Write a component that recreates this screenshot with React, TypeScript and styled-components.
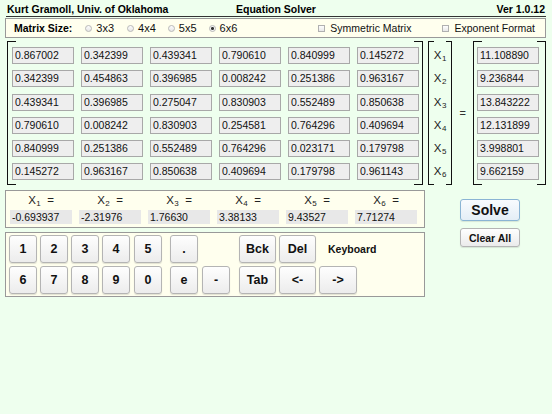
import React from "react";
import styled, { createGlobalStyle } from "styled-components";

const Global = createGlobalStyle`
  html, body { margin: 0; padding: 0; background: #eeffee; }
  body { font-family: "Liberation Sans", Arial, Helvetica, sans-serif; color: #000; }
  * { box-sizing: border-box; }
`;

const Page = styled.div`
  width: 552px;
  height: 414px;
  padding: 0 6px 0 5px;
  background: #eeffee;
`;

const TitleBar = styled.div`
  display: grid;
  grid-template-columns: 1fr auto 1fr;
  align-items: center;
  height: 17px;
  margin-left: 1px;
  padding: 0 1px;
  border-bottom: 1.5px solid #333;
  font-size: 10.5px;
  font-weight: bold;
`;

const TitleText = styled.div<{ $align: string }>`
  text-align: ${(p) => p.$align};
  padding-top: 1px;
`;

const SizeBar = styled.div`
  margin-top: 1px;
  height: 20px;
  display: flex;
  align-items: center;
  padding: 0 10px 0 8px;
  background: #ffffee;
  border: 1px solid #999;
  font-size: 10.5px;
`;

const SizeLabel = styled.span`
  font-weight: bold;
  margin-right: 13px;
`;

const Option = styled.label<{ $gap?: number; $ml?: string; $fs?: number }>`
  display: flex;
  align-items: center;
  gap: 4px;
  margin-right: ${(p) => p.$gap ?? 0}px;
  margin-left: ${(p) => p.$ml ?? "0"};
  font-size: ${(p) => p.$fs ?? 11}px;
  color: #111;
`;

const Radio = styled.span<{ $on?: boolean }>`
  width: 7px;
  height: 7px;
  border-radius: 50%;
  border: 1px solid #b8b8b8;
  background: ${(p) =>
    p.$on
      ? "radial-gradient(circle, #333 0 1.3px, #f4f4f4 1.6px)"
      : "linear-gradient(#fdfdfd, #e6e6e6)"};
`;

const Check = styled.span`
  width: 7px;
  height: 7px;
  border: 1px solid #b0b0b0;
  background: linear-gradient(#fdfdfd, #e8e8e8);
  margin-right: 1px;
`;

const MatrixArea = styled.div`
  display: flex;
  margin-top: 3px;
  margin-left: 2px;
  height: 144px;
`;

const Bracket = styled.div<{ $tick: number; $w: number; $pl: number }>`
  width: ${(p) => p.$w}px;
  border-left: 1px solid #111;
  border-right: 1px solid #111;
  padding: 6px 0 0 ${(p) => p.$pl}px;
  background:
    linear-gradient(#111, #111) left top / ${(p) => p.$tick}px 1px no-repeat,
    linear-gradient(#111, #111) right top / ${(p) => p.$tick}px 1px no-repeat,
    linear-gradient(#111, #111) left bottom / ${(p) => p.$tick}px 1px no-repeat,
    linear-gradient(#111, #111) right bottom / ${(p) => p.$tick}px 1px no-repeat;
`;

const CellGrid = styled.div<{ $cols: number }>`
  display: grid;
  grid-template-columns: repeat(${(p) => p.$cols}, 62px);
  grid-auto-rows: 17px;
  column-gap: 7px;
  row-gap: 6.3px;
`;

const Cell = styled.div`
  background: #eeeeee;
  border: 1px solid #a8a8a8;
  font-size: 10.5px;
  line-height: 15px;
  padding-left: 2px;
  color: #111;
`;

const XLabel = styled.div`
  text-align: center;
  font-size: 11.5px;
  line-height: 17px;
  color: #222;
  sub {
    font-size: 8px;
    line-height: 0;
    vertical-align: -2px;
    margin-left: 0.5px;
  }
`;

const XGrid = styled.div`
  display: grid;
  grid-auto-rows: 17px;
  row-gap: 6.3px;
`;

const Gap = styled.div<{ $w: number }>`
  width: ${(p) => p.$w}px;
`;

const Equals = styled.div`
  width: 21px;
  display: flex;
  align-items: center;
  justify-content: center;
  font-size: 11px;
  color: #333;
`;

const Bottom = styled.div`
  display: flex;
  margin-top: 5px;
`;

const LeftCol = styled.div`
  width: 420px;
  display: flex;
  flex-direction: column;
  gap: 4px;
`;

const Panel = styled.div`
  background: #ffffee;
  border: 1px solid #999;
`;

const ResultPanel = styled(Panel)`
  display: grid;
  grid-template-columns: repeat(6, 62px);
  column-gap: 7px;
  row-gap: 2px;
  grid-template-rows: 15px 14px;
  padding: 2px 0 3px 4px;
`;

const ResLabel = styled.div`
  text-align: center;
  font-size: 11.5px;
  line-height: 15px;
  color: #222;
  sub {
    font-size: 8px;
    line-height: 0;
    vertical-align: -2px;
    margin-left: 0.5px;
  }
`;

const ResBox = styled.div`
  background: #e8e8e8;
  font-size: 10.5px;
  line-height: 14px;
  padding-left: 2px;
  color: #111;
`;

const KeyPanel = styled(Panel)`
  display: grid;
  grid-template-columns: 28px 31px 31px 31px 32px 36px 32px 46px 40px 41px 1fr;
  grid-template-rows: 28px 28px;
  row-gap: 3px;
  padding: 2px 0 2px 3px;
`;

const Key = styled.button<{ $w?: number }>`
  justify-self: end;
  width: ${(p) => p.$w ?? 28}px;
  height: 28px;
  padding: 0;
  font-family: inherit;
  font-size: 12.5px;
  font-weight: bold;
  color: #111;
  border: 1px solid #b4b4b4;
  border-radius: 3px;
  background: linear-gradient(#fefefe, #ececec);
  box-shadow: 0 1px 1px rgba(0, 0, 0, 0.12);
`;

const Blank = styled.div``;

const KeyboardLabel = styled.div`
  grid-column: span 2;
  align-self: center;
  padding-left: 12px;
  font-size: 10.5px;
  font-weight: bold;
  color: #111;
`;

const RightCol = styled.div`
  flex: 1;
  display: flex;
  flex-direction: column;
  align-items: center;
  padding-top: 9px;
  padding-left: 9px;
`;

const ActionButton = styled.button<{ $primary?: boolean }>`
  width: 60px;
  height: ${(p) => (p.$primary ? 22 : 19)}px;
  margin-bottom: 7px;
  padding: 0;
  font-family: inherit;
  font-weight: bold;
  font-size: ${(p) => (p.$primary ? 14 : 10.5)}px;
  color: #111;
  border: 1px solid ${(p) => (p.$primary ? "#8ab4d4" : "#b4b4b4")};
  border-radius: 3px;
  background: ${(p) =>
    p.$primary ? "linear-gradient(#f8fbfe, #e4eef6)" : "linear-gradient(#fefefe, #ebebeb)"};
  box-shadow: 0 1px 1px rgba(0, 0, 0, 0.1);
`;

const matrix = [
  ["0.867002", "0.342399", "0.439341", "0.790610", "0.840999", "0.145272"],
  ["0.342399", "0.454863", "0.396985", "0.008242", "0.251386", "0.963167"],
  ["0.439341", "0.396985", "0.275047", "0.830903", "0.552489", "0.850638"],
  ["0.790610", "0.008242", "0.830903", "0.254581", "0.764296", "0.409694"],
  ["0.840999", "0.251386", "0.552489", "0.764296", "0.023171", "0.179798"],
  ["0.145272", "0.963167", "0.850638", "0.409694", "0.179798", "0.961143"],
];
const rhs = ["11.108890", "9.236844", "13.843222", "12.131899", "3.998801", "9.662159"];
const sol = ["-0.693937", "-2.31976", "1.76630", "3.38133", "9.43527", "7.71274"];

export default function App() {
  return (
    <>
      <Global />
      <Page>
        <TitleBar>
          <TitleText $align="left">Kurt Gramoll, Univ. of Oklahoma</TitleText>
          <TitleText $align="center">Equation Solver</TitleText>
          <TitleText $align="right">Ver 1.0.12</TitleText>
        </TitleBar>

        <SizeBar>
          <SizeLabel>Matrix Size:</SizeLabel>
          <Option $gap={13}><Radio />3x3</Option>
          <Option $gap={12}><Radio />4x4</Option>
          <Option $gap={12}><Radio />5x5</Option>
          <Option><Radio $on />6x6</Option>
          <Option $ml="auto" $fs={10.5}><Check />Symmetric Matrix</Option>
          <Option $ml="31px" $fs={10.5}><Check />Exponent Format</Option>
        </SizeBar>

        <MatrixArea>
          <Bracket $tick={8} $w={417} $pl={4}>
            <CellGrid $cols={6}>
              {matrix.flat().map((v, i) => (
                <Cell key={i}>{v}</Cell>
              ))}
            </CellGrid>
          </Bracket>
          <Gap $w={5} />
          <Bracket $tick={5} $w={24} $pl={0}>
            <XGrid>
              {[1, 2, 3, 4, 5, 6].map((n) => (
                <XLabel key={n}>
                  X<sub>{n}</sub>
                </XLabel>
              ))}
            </XGrid>
          </Bracket>
          <Equals>=</Equals>
          <Bracket $tick={8} $w={73} $pl={3}>
            <CellGrid $cols={1}>
              {rhs.map((v, i) => (
                <Cell key={i}>{v}</Cell>
              ))}
            </CellGrid>
          </Bracket>
        </MatrixArea>

        <Bottom>
          <LeftCol>
            <ResultPanel>
              {sol.map((_, i) => (
                <ResLabel key={"l" + i}>
                  X<sub>{i + 1}</sub>&nbsp;&nbsp;=
                </ResLabel>
              ))}
              {sol.map((v, i) => (
                <ResBox key={"v" + i}>{v}</ResBox>
              ))}
            </ResultPanel>
            <KeyPanel>
              <Key>1</Key>
              <Key>2</Key>
              <Key>3</Key>
              <Key>4</Key>
              <Key>5</Key>
              <Key>.</Key>
              <Blank />
              <Key $w={37}>Bck</Key>
              <Key $w={37}>Del</Key>
              <KeyboardLabel>Keyboard</KeyboardLabel>
              <Key>6</Key>
              <Key>7</Key>
              <Key>8</Key>
              <Key>9</Key>
              <Key>0</Key>
              <Key>e</Key>
              <Key>-</Key>
              <Key $w={37}>Tab</Key>
              <Key $w={37}>&lt;-</Key>
              <Key $w={38}>-&gt;</Key>
            </KeyPanel>
          </LeftCol>
          <RightCol>
            <ActionButton $primary>Solve</ActionButton>
            <ActionButton>Clear All</ActionButton>
          </RightCol>
        </Bottom>
      </Page>
    </>
  );
}
